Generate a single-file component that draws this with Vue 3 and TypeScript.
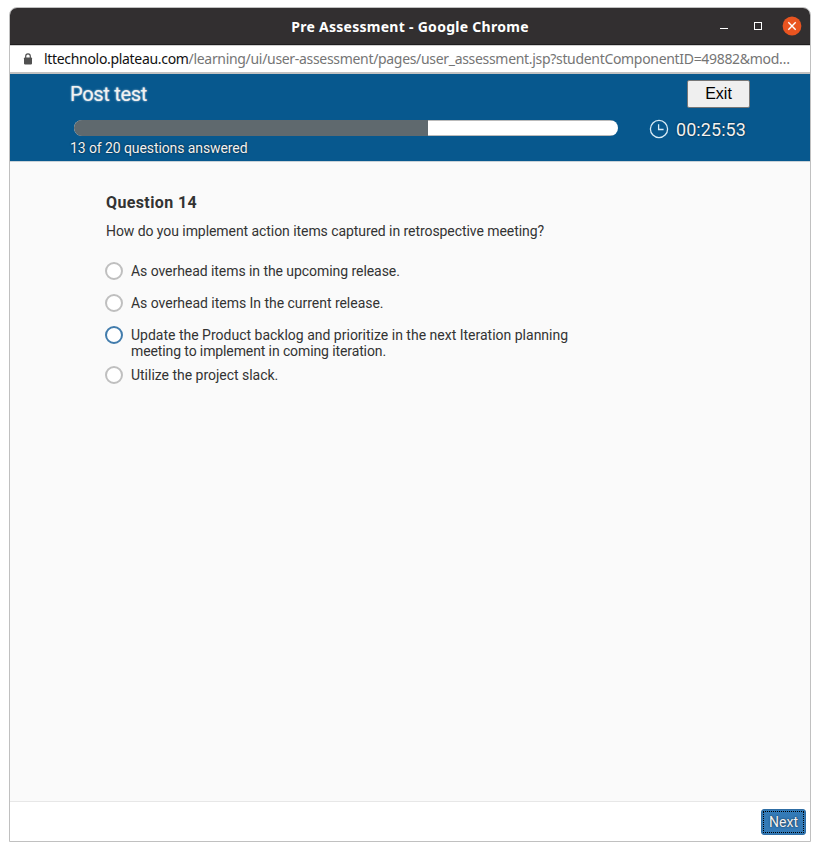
<script setup lang="ts">
interface Line {
  text: string
  tracking: number
}

interface Option {
  id: number
  lines: Line[]
  focused: boolean
}

const total = 20
const answered = 13
const options: Option[] = [
  { id: 1, lines: [{ text: 'As overhead items in the upcoming release.', tracking: -0.06 }], focused: false },
  { id: 2, lines: [{ text: 'As overhead items In the current release.', tracking: -0.03 }], focused: false },
  {
    id: 3,
    lines: [
      { text: 'Update the Product backlog and prioritize in the next Iteration planning', tracking: 0 },
      { text: 'meeting to implement in coming iteration.', tracking: -0.11 },
    ],
    focused: true,
  },
  { id: 4, lines: [{ text: 'Utilize the project slack.', tracking: -0.02 }], focused: false },
]
</script>

<template>
  <div class="window">
    <header class="titlebar">
      <h1 class="window-title">Pre Assessment - Google Chrome</h1>
      <div class="controls">
        <svg width="12" height="12" viewBox="0 0 12 12"><path d="M2 8.5h8" stroke="#fff" /></svg>
        <svg width="12" height="12" viewBox="0 0 12 12"><rect x="2.5" y="2.5" width="7" height="7" fill="none" stroke="#fff" /></svg>
        <svg width="20" height="20" viewBox="0 0 20 20"><circle cx="10" cy="10" r="9.4" fill="#e95420" /><path d="M6.3 6.3l7.4 7.4M13.7 6.3l-7.4 7.4" stroke="#fff" stroke-width="1.4" /></svg>
      </div>
    </header>
    <div class="address">
      <svg class="lock" width="10" height="12" viewBox="0 0 10 12"><path d="M2.7 5V3.2a2.3 2.3 0 0 1 4.6 0V5" fill="none" stroke="#505050" stroke-width="1.2" /><rect x="1" y="4.4" width="8" height="7" rx="0.8" fill="#505050" /></svg>
      <span class="domain">lttechnolo.plateau.com</span><span class="path">/learning/ui/user-assessment/pages/user_assessment.jsp?studentComponentID=49882&amp;mod…</span>
    </div>
    <section class="banner">
      <div class="row">
        <h2 class="test-name">Post test</h2>
        <button class="exit">Exit</button>
      </div>
      <div class="row progress-row">
        <div class="track"><div class="fill" :style="{ width: (answered / total) * 100 + '%' }"></div></div>
        <div class="timer">
          <svg width="20" height="20" viewBox="0 0 20 20" fill="none" stroke="#d8ebf6" stroke-width="1.3"><circle cx="10" cy="10" r="8.6" /><path d="M9.6 5.2v5.3h5" /></svg>
          <span class="time">00:25:53</span>
        </div>
      </div>
      <p class="count">{{ answered }} of {{ total }} questions answered</p>
    </section>
    <main class="content">
      <h3 class="number">Question 14</h3>
      <p class="prompt">How do you implement action items captured in retrospective meeting?</p>
      <ul class="options">
        <li v-for="o in options" :key="o.id" class="option">
          <span class="radio" :class="{ focused: o.focused }"></span>
          <span class="label">
            <span v-for="l in o.lines" :key="l.text" class="line" :style="{ letterSpacing: l.tracking + 'px' }">{{ l.text }}</span>
          </span>
        </li>
      </ul>
    </main>
    <footer class="footer"><button class="next">Next</button></footer>
  </div>
</template>

<style>
body { background: #fff; }
</style>
<style scoped>
* { box-sizing: border-box; margin: 0; padding: 0; }
.window {
  width: 802px; height: 835px; margin: 7px 0 0 9px;
  display: flex; flex-direction: column;
  border: 1px solid #c0c0c0; border-radius: 8px 8px 0 0; overflow: hidden;
  font-family: Roboto, "Liberation Sans", sans-serif; font-size: 14px; color: #333;
}
.titlebar {
  height: 37px; flex: none; display: grid; grid-template-columns: 1fr auto 1fr; align-items: center;
  background: #322f30; border-bottom: 1px solid #1f1d1e; color: #fff;
}
.window-title { grid-column: 2; font: 700 14px/20px "Noto Sans", sans-serif; letter-spacing: 0.28px; padding-top: 1px; }
.controls { display: flex; align-items: center; justify-content: flex-end; gap: 22px; padding-right: 8px; }
.controls svg:last-child { margin-left: -4px; }
.address {
  height: 29px; flex: none; display: flex; align-items: center; padding-left: 13px;
  border-top: 1px solid #d0d0d0; border-bottom: 2px solid #c2c2c2;
  font: 14px/20px "Noto Sans", sans-serif; letter-spacing: -0.315px; white-space: nowrap; background: #fff;
}
.lock { margin-right: 11px; flex: none; }
.domain { color: #111; }
.path { color: #757575; }
.banner {
  height: 88px; flex: none; padding: 6px 60px 0; background: #07588e; color: #f2f2f2;
  border-bottom: 1px solid #c9d2d8; text-shadow: 0 0 2px rgba(0, 0, 0, 0.8);
}
.row { display: flex; justify-content: space-between; align-items: center; }
.test-name {
  font-size: 20px; font-weight: 400; line-height: 28px; letter-spacing: -0.3px;
  text-shadow: 0 0 2px rgba(255, 255, 255, 0.8);
}
.exit {
  width: 63px; height: 28px; background: #efefef; border: 1px solid #767676; border-radius: 2px;
  font: 16px "Liberation Sans", sans-serif; color: #000; text-shadow: none;
}
.progress-row { padding: 12px 4px 0; height: 30px; align-items: flex-start; }
.track { width: 544px; height: 16px; border-radius: 8px; overflow: hidden; background: linear-gradient(#bbb 1px, #fff 1px, #fff 15px, #bbb 15px); }
.fill { height: 100%; background: #5f696e; }
.timer { display: flex; align-items: center; gap: 7px; font-size: 18px; line-height: 20px; letter-spacing: 0.08px; margin-top: -2px; }
.timer svg { display: block; }
.time { padding-top: 2px; margin-bottom: -1px; }
.count { line-height: 20px; letter-spacing: -0.09px; }
.content { flex: 1; background: #fafafa; padding: 31px 96px 0; }
.number { font-size: 16px; line-height: 20px; font-weight: 700; letter-spacing: 0.38px; }
.prompt { line-height: 18px; margin-top: 9px; letter-spacing: -0.065px; }
.options { list-style: none; margin-top: 22px; }
.option { display: flex; gap: 8px; padding-bottom: 8px; margin-left: -1px; }
.radio { width: 18px; height: 18px; border: 2px solid #bfbfbf; border-radius: 50%; background: #fff; flex: none; }
.focused { border-color: #427cac; }
.label { line-height: 16px; padding-top: 1px; margin-bottom: -1px; min-height: 25px; }
.line { display: block; }
.footer { height: 40px; flex: none; background: #fff; border-top: 1px solid #e7e7e7; padding: 7px 4px; display: flex; justify-content: flex-end; }
.next {
  width: 45px; height: 26px; background: #337ab7; color: #f2f2f2; border: 1px solid #2e6da4; border-radius: 3px;
  font: 14px Roboto, sans-serif; text-shadow: 0 0 2px rgba(0, 0, 0, 0.8); outline: 1px dotted #000; outline-offset: -3px;
}
</style>
